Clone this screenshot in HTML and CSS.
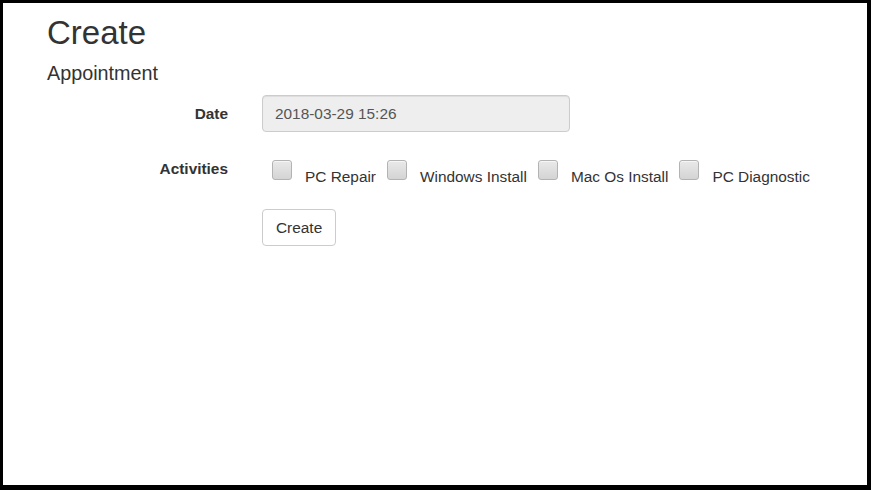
FILE: index.html
```html
<!DOCTYPE html>
<html>
<head>
<meta charset="utf-8">
<title>Create</title>
<link rel="stylesheet" href="styles.css">
</head>
<body>
<div class="frame">
  <div class="container">
    <h2 class="title">Create</h2>
    <h4 class="subtitle">Appointment</h4>
    <form class="form">
      <div class="row row-date">
        <label class="row-label label-date">Date</label>
        <div class="row-field">
          <input class="text-input" type="text" value="2018-03-29 15:26" readonly>
        </div>
      </div>
      <div class="row row-activities">
        <label class="row-label label-activities">Activities</label>
        <div class="row-field checks">
          <label class="check"><input type="checkbox" class="box"><span class="check-text">PC Repair</span></label>
          <label class="check"><input type="checkbox" class="box"><span class="check-text">Windows Install</span></label>
          <label class="check"><input type="checkbox" class="box"><span class="check-text">Mac Os Install</span></label>
          <label class="check"><input type="checkbox" class="box"><span class="check-text">PC Diagnostic</span></label>
        </div>
      </div>
      <div class="row row-submit">
        <div class="row-label"></div>
        <div class="row-field">
          <button type="button" class="btn">Create</button>
        </div>
      </div>
    </form>
  </div>
</div>
</body>
</html>
```

FILE: styles.css
```css
* {
  box-sizing: border-box;
}

html, body {
  margin: 0;
  padding: 0;
  background: #000;
}

body {
  width: 871px;
  height: 490px;
  font-family: "Liberation Sans", Arial, Helvetica, sans-serif;
  font-size: 15.4px;
  line-height: 22px;
  color: #333;
}

.frame {
  width: 871px;
  height: 490px;
  background: #fff;
  border-style: solid;
  border-color: #000;
  border-width: 3px 4px 5px 3px;
}

.container {
  padding-left: 44px;
}

.title {
  margin: 12px 0 0 0;
  font-size: 33px;
  line-height: 36px;
  font-weight: 400;
  color: #333;
}

.subtitle {
  margin: 11px 0 0 0;
  font-size: 19.8px;
  line-height: 22px;
  font-weight: 400;
  color: #333;
}

.form {
  margin: 0;
}

.row {
  display: grid;
  grid-template-columns: 181px 1fr;
  column-gap: 34px;
  align-items: start;
}

.row-date {
  margin-top: 11px;
}

.row-activities {
  margin-top: 18px;
}

.row-submit {
  margin-top: 21px;
}

.row-label {
  text-align: right;
  font-weight: 700;
  font-size: 15.4px;
  line-height: 22px;
  color: #333;
}

.label-date {
  padding-top: 8px;
}

.label-activities {
  padding-top: 8px;
}

.text-input {
  display: block;
  width: 308px;
  height: 37px;
  margin: 0;
  padding: 6px 12px;
  font-family: inherit;
  font-size: 15.4px;
  line-height: 22px;
  color: #555;
  background: #eee;
  border: 1px solid #ccc;
  border-radius: 4px;
  box-shadow: inset 0 1px 1px rgba(0, 0, 0, 0.075);
  outline: none;
}

.checks {
  display: flex;
  align-items: flex-start;
  padding-left: 10px;
  column-gap: 11px;
}

.check {
  display: flex;
  align-items: flex-start;
  column-gap: 13px;
  font-weight: 400;
  white-space: nowrap;
}

.box {
  appearance: none;
  -webkit-appearance: none;
  width: 20px;
  height: 20px;
  margin: 10px 0 0 0;
  border: 1px solid #b3b3b3;
  border-radius: 3px;
  background: linear-gradient(#e9e9e9, #d4d4d4);
  box-shadow: inset 0 1px 0 rgba(255, 255, 255, 0.6);
}

.check-text {
  padding-top: 16px;
  color: #333;
}

.btn {
  display: block;
  height: 37px;
  margin: 0;
  padding: 7px 13px 6px;
  font-family: inherit;
  font-size: 15.4px;
  line-height: 22px;
  color: #333;
  background: #fff;
  border: 1px solid #ccc;
  border-radius: 4px;
}
```
